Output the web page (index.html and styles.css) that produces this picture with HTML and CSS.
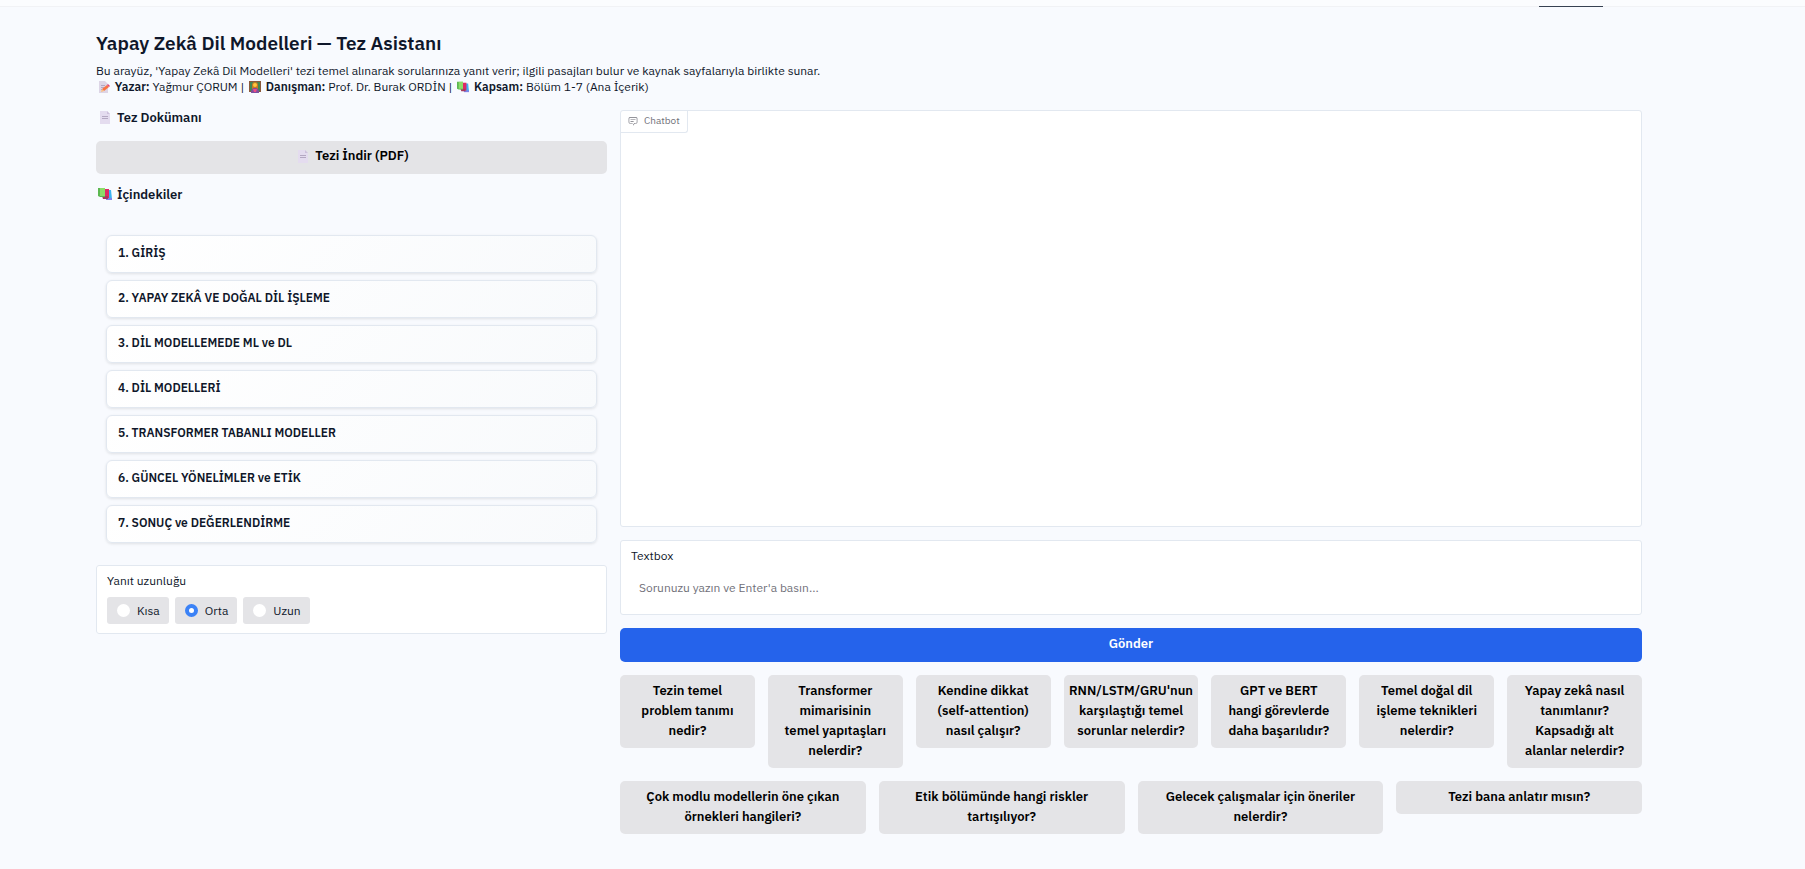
FILE: index.html
```html
<!DOCTYPE html>
<html lang="tr">
<head>
<meta charset="utf-8">
<title>Yapay Zekâ Dil Modelleri — Tez Asistanı</title>
<link rel="stylesheet" href="styles.css">
</head>
<body>
<svg class="defs" aria-hidden="true">
  <symbol id="page" viewBox="0 0 14 14">
    <path fill="#e4dcef" d="M2 1h7l3 3v10H2z"/>
    <path fill="#cdc1dc" d="M9 1v3h3z"/>
    <path fill="#b4a8c2" d="M4 6h6v1H4zM4 8h6v1H4z"/>
  </symbol>
  <symbol id="memo" viewBox="0 0 12 12">
    <path fill="#ddd5e6" d="M1 0h6l3 3v9H1z"/>
    <path fill="#b4a8c2" d="M3 4h4v1H3zM3 6h3v1H3zM3 8h2v1H3z"/>
    <path fill="#f97342" d="M4 8l5-4 2 2-5 4z"/>
    <path fill="#e0447a" d="M9 4l1-1 2 2-1 1z"/>
    <path fill="#ffc07a" d="M4 8l-1 3 3-1z"/>
  </symbol>
  <symbol id="teacher" viewBox="0 0 12 12">
    <path fill="#8a5a3c" d="M0 0h12v11H0z"/>
    <path fill="#438553" d="M1 1h10v9H1z"/>
    <path fill="#c87924" d="M3 4a3 3 0 0 1 6 0v4H3z"/>
    <circle cx="6" cy="4" r="2" fill="#ffc83d"/>
    <path fill="#7d4f9e" d="M2 12c0-3 1-5 4-5s4 2 4 5z"/>
    <path fill="#f04b83" d="M4 8h4l-1 3H5z"/>
  </symbol>
  <symbol id="books" viewBox="0 0 14 14">
    <path fill="#3bb3f2" d="M10 3h3l1 9h-4z"/>
    <path fill="#7d83e8" d="M8 11h6v2H8z"/>
    <path fill="#df2864" d="M7 2h4v9H7z"/>
    <path fill="#a7385d" d="M4 9h6v3H5z"/>
    <path fill="#5cb851" d="M0 1h7v9H2L0 9z"/>
    <path fill="#8ddc69" d="M2 1h5v8H2z"/>
  </symbol>
</svg>
<header class="topbar"><span class="tab-mark"></span></header>
<main class="app">
  <h1 class="title">Yapay Zekâ Dil Modelleri — Tez Asistanı</h1>
  <p class="intro">Bu arayüz, 'Yapay Zekâ Dil Modelleri' tezi temel alınarak sorularınıza yanıt verir; ilgili pasajları bulur ve kaynak sayfalarıyla birlikte sunar.<br>
  <svg class="emoji"><use href="#memo"/></svg> <b>Yazar:</b> Yağmur ÇORUM | <svg class="emoji"><use href="#teacher"/></svg> <b>Danışman:</b> Prof. Dr. Burak ORDİN | <svg class="emoji"><use href="#books"/></svg> <b>Kapsam:</b> Bölüm 1-7 (Ana İçerik)</p>
  <div class="columns">
    <section class="side">
      <h2 class="heading"><svg class="emoji large"><use href="#page"/></svg>Tez Dokümanı</h2>
      <button class="btn download"><svg class="emoji large"><use href="#page"/></svg>Tezi İndir (PDF)</button>
      <h2 class="heading"><svg class="emoji large"><use href="#books"/></svg>İçindekiler</h2>
      <div class="toc">
        <button class="chapter">1. GİRİŞ</button>
        <button class="chapter">2. YAPAY ZEKÂ VE DOĞAL DİL İŞLEME</button>
        <button class="chapter">3. DİL MODELLEMEDE ML ve DL</button>
        <button class="chapter">4. DİL MODELLERİ</button>
        <button class="chapter">5. TRANSFORMER TABANLI MODELLER</button>
        <button class="chapter">6. GÜNCEL YÖNELİMLER ve ETİK</button>
        <button class="chapter">7. SONUÇ ve DEĞERLENDİRME</button>
      </div>
      <fieldset class="panel length">
        <legend class="label legend">Yanıt uzunluğu</legend>
        <div class="options">
          <label class="option"><input class="radio" type="radio" name="len">Kısa</label>
          <label class="option"><input class="radio" type="radio" name="len" checked>Orta</label>
          <label class="option"><input class="radio" type="radio" name="len">Uzun</label>
        </div>
      </fieldset>
    </section>
    <section class="main">
      <div class="panel chat">
        <div class="chat-label"><svg class="chat-icon" viewBox="0 0 32 32"><path fill="currentColor" d="M17.740 30 16 29l4-7h6a2 2 0 0 0 2-2V8a2 2 0 0 0-2-2H6a2 2 0 0 0-2 2v12a2 2 0 0 0 2 2h9v2H6a4 4 0 0 1-4-4V8a4 4 0 0 1 4-4h20a4 4 0 0 1 4 4v12a4 4 0 0 1-4 4h-4.840Z"/><path fill="currentColor" d="M8 10h16v2H8zm0 6h10v2H8z"/></svg>Chatbot</div>
      </div>
      <div class="panel ask">
        <label class="label" for="q">Textbox</label>
        <input class="question" id="q" type="text" placeholder="Sorunuzu yazın ve Enter'a basın...">
      </div>
      <button class="btn send">Gönder</button>
      <div class="row">
        <button class="btn">Tezin temel problem tanımı nedir?</button>
        <button class="btn">Transformer mimarisinin temel yapıtaşları nelerdir?</button>
        <button class="btn">Kendine dikkat (self-attention) nasıl çalışır?</button>
        <button class="btn">RNN/LSTM/GRU'nun karşılaştığı temel sorunlar nelerdir?</button>
        <button class="btn">GPT ve BERT hangi görevlerde daha başarılıdır?</button>
        <button class="btn">Temel doğal dil işleme teknikleri nelerdir?</button>
        <button class="btn">Yapay zekâ nasıl tanımlanır? Kapsadığı alt alanlar nelerdir?</button>
      </div>
      <div class="row wide">
        <button class="btn">Çok modlu modellerin öne çıkan örnekleri hangileri?</button>
        <button class="btn">Etik bölümünde hangi riskler tartışılıyor?</button>
        <button class="btn">Gelecek çalışmalar için öneriler nelerdir?</button>
        <button class="btn">Tezi bana anlatır mısın?</button>
      </div>
    </section>
  </div>
</main>
</body>
</html>
```
FILE: styles.css
```css
* { box-sizing: border-box; }
body {
  margin: 0;
  min-height: 100vh;
  background: #f8fafe;
  color: #0f172a;
  font: 12px/16px "IBM Plex Sans", Roboto, "Noto Sans", sans-serif;
}
button, input { font: inherit; color: inherit; }
.defs { position: absolute; width: 0; height: 0; }
.topbar {
  display: flex;
  justify-content: flex-end;
  align-items: flex-end;
  height: 7px;
  padding-right: 202px;
  background: #fbfcfe;
  border-bottom: 1px solid #f1f2f5;
}
.tab-mark { width: 64px; height: 1px; margin-bottom: -1px; background: #374151; }
.app { padding: 24px 163px 32px 96px; }
.title { margin: 0 0 8px; font-size: 19px; line-height: 24px; font-weight: 600; }
.intro { margin: 0 0 15px; }
.intro b { font-weight: 600; }
.emoji { width: 12px; height: 12px; margin: 0 2px; vertical-align: -2px; }
.emoji.large { width: 14px; height: 14px; margin: 0 5px 0 2px; }
.columns { display: grid; grid-template-columns: 1fr 2fr; gap: 13px; align-items: start; }
.side, .main { display: flex; flex-direction: column; min-width: 0; }
.main { gap: 13px; }
.heading { margin: 0; font-size: 13px; line-height: 16px; font-weight: 600; }
.btn {
  display: flex;
  justify-content: center;
  padding: 6px 15px 7px;
  border: 0;
  border-radius: 5px;
  background: #e4e4e7;
  color: #000;
  font-size: 13px;
  line-height: 20px;
  font-weight: 600;
}
.download { align-items: center; margin: 15px 0 13px; padding: 5px 15px 8px; }
.toc { display: flex; flex-direction: column; gap: 7px; padding: 32px 10px 22px; }
.chapter {
  height: 38px;
  padding: 0 11px 3px;
  border: 1px solid #e2e8f0;
  border-radius: 6px;
  background: linear-gradient(135deg, #fff, #f8fafc);
  box-shadow: 0 1px 3px rgba(0, 0, 0, .1);
  text-align: left;
  font-weight: 600;
}
.panel { margin: 0; border: 1px solid #e2e8f0; border-radius: 3px; background: #fff; }
.length { padding: 7px 10px 9px; }
.label { display: block; padding: 0; }
.legend { float: left; }
.options { display: flex; gap: 6px; clear: both; padding-top: 8px; }
.option {
  display: flex;
  align-items: center;
  gap: 7px;
  height: 27px;
  padding: 0 9px 0 10px;
  border-radius: 3px;
  background: #e4e4e7;
}
.radio { appearance: none; width: 13px; height: 13px; margin: 0; border-radius: 50%; background: #fff; }
.radio:checked { border: 4px solid #3b82f6; }
.chat { height: 48vh; }
.chat-label {
  display: inline-flex;
  align-items: center;
  gap: 6px;
  height: 22px;
  padding: 0 7px 2px;
  border: solid #e2e8f0;
  border-width: 0 1px 1px 0;
  border-radius: 0 0 3px;
  color: #71717a;
  font-size: 10px;
}
.chat-icon { width: 10px; height: 10px; }
.ask { display: flex; flex-direction: column; gap: 8px; height: 75px; padding: 7px 10px; }
.question { width: 100%; height: 32px; padding: 0 8px 2px; border: 0; background: none; outline: 0; }
.question::placeholder { color: #71717a; opacity: 1; }
.send { padding: 6px 15px 8px; background: #2563eb; color: #fff; }
.row { display: grid; grid-template-columns: repeat(7, minmax(0, 1fr)); gap: 13px; align-items: start; }
.wide { grid-template-columns: repeat(4, minmax(0, 1fr)); }
```
